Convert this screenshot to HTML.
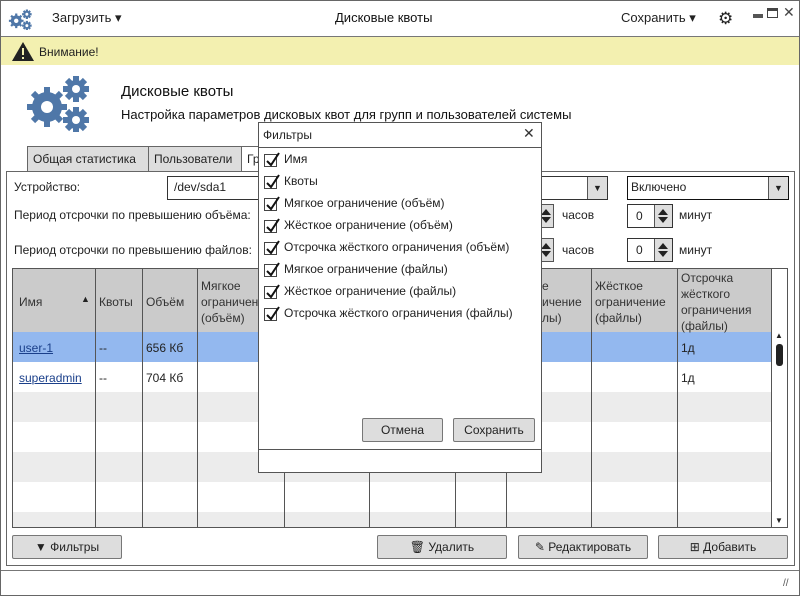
<!DOCTYPE html>
<html><head><meta charset="utf-8"><style>
*{box-sizing:border-box;margin:0;padding:0}
body{width:800px;height:596px;position:relative;overflow:hidden;background:#fff;font-family:"Liberation Sans","DejaVu Sans",sans-serif;font-size:12px;color:#222}
.a{position:absolute}
.btn{position:absolute;background:#ddd;border:1px solid #777;border-radius:2px;text-align:center;font-size:12px;line-height:22px}
.cell{position:absolute;border-left:1px solid #555}
.cb{position:absolute;width:13px;height:13px;border:1px solid #444;background:#fff}
.cb svg{position:absolute;left:0;top:-3px}
.hl{position:absolute;font-size:12px;color:#333;line-height:16px}
.spin{position:absolute;width:46px;height:24px;border:1px solid #333;background:#fff}
.spin span{position:absolute;left:8px;top:4px}
.spin i{position:absolute;right:0;top:0;width:18px;height:22px;background:#ddd;border-left:1px solid #555}
.sp{position:absolute;width:16px;height:24px;background:#ddd;border:1px solid #555}
.spin i:before,.sp:before{content:"";position:absolute;left:3px;top:4px;border-left:5px solid transparent;border-right:5px solid transparent;border-bottom:6px solid #222}
.spin i:after,.sp:after{content:"";position:absolute;left:3px;top:12px;border-left:5px solid transparent;border-right:5px solid transparent;border-top:6px solid #222}
.sp:before,.sp:after{left:2px}
</style></head><body>
<div class="a" style="left:0;top:0;width:800px;height:596px;border:1px solid #666"></div>
<svg class="a" style="left:8px;top:8px" width="26" height="22" viewBox="0 0 70 60"><g fill="#4f77a8"><circle cx="22" cy="35" r="15"/><circle cx="51" cy="17" r="9"/><circle cx="51" cy="48" r="9"/><g stroke="#4f77a8" stroke-width="6"><path d="M22 15v40M2 35h40M8 21l28 28M36 21L8 49"/><path d="M51 4v26M38 17h26M51 35v26M38 48h26M42 8l18 18M60 8L42 26M42 39l18 18M60 39L42 57"/></g></g><g fill="#fff"><circle cx="22" cy="35" r="6"/><circle cx="51" cy="17" r="4"/><circle cx="51" cy="48" r="4"/></g></svg>
<div class="a" style="left:52px;top:10px;font-size:13px">Загрузить ▾</div>
<div class="a" style="left:335px;top:10px;font-size:13px;color:#111">Дисковые квоты</div>
<div class="a" style="left:621px;top:10px;font-size:13px">Сохранить ▾</div>
<div class="a" style="left:718px;top:9px;font-size:17px;color:#222">⚙</div>
<div class="a" style="left:753px;top:14px;width:10px;height:4px;background:#555"></div>
<div class="a" style="left:767px;top:8px;width:11px;height:10px;border:1px solid #444;border-top:3px solid #444"></div>
<div class="a" style="left:783px;top:4px;font-size:14px;color:#444">✕</div>
<div class="a" style="left:1px;top:36px;width:798px;height:1px;background:#777"></div>
<div class="a" style="left:1px;top:37px;width:798px;height:28px;background:#f3f0b0"></div>
<svg class="a" style="left:11px;top:41px" width="24" height="21" viewBox="0 0 24 21"><path d="M12 1L23 20H1Z" fill="#222"/><rect x="11" y="7" width="2" height="7" fill="#f3f0b0"/><rect x="11" y="16" width="2" height="2" fill="#f3f0b0"/></svg>
<div class="a" style="left:39px;top:45px;font-size:12px">Внимание!</div>
<svg class="a" style="left:25px;top:72px" width="70" height="60" viewBox="0 0 70 60"><g fill="#4f77a8"><circle cx="22" cy="35" r="15"/><circle cx="51" cy="17" r="9"/><circle cx="51" cy="48" r="9"/><g stroke="#4f77a8" stroke-width="6"><path d="M22 15v40M2 35h40M8 21l28 28M36 21L8 49"/><path d="M51 4v26M38 17h26M51 35v26M38 48h26M42 8l18 18M60 8L42 26M42 39l18 18M60 39L42 57"/></g></g><g fill="#fff"><circle cx="22" cy="35" r="6"/><circle cx="51" cy="17" r="4"/><circle cx="51" cy="48" r="4"/></g></svg>
<div class="a" style="left:121px;top:83px;font-size:15px;color:#111">Дисковые квоты</div>
<div class="a" style="left:121px;top:107px;font-size:13px;color:#111">Настройка параметров дисковых квот для групп и пользователей системы</div>
<div class="a" style="left:27px;top:146px;width:122px;height:26px;background:#ddd;border:1px solid #666;padding:5px 5px">Общая статистика</div>
<div class="a" style="left:148px;top:146px;width:94px;height:26px;background:#ddd;border:1px solid #666;padding:5px 5px">Пользователи</div>
<div class="a" style="left:241px;top:146px;width:30px;height:26px;background:#fff;border:1px solid #666;border-bottom:none;padding:5px 5px">Гр</div>
<div class="a" style="left:6px;top:171px;width:789px;height:395px;border:1px solid #666"></div>
<div class="a" style="left:14px;top:180px">Устройство:</div>
<div class="a" style="left:167px;top:176px;width:441px;height:24px;border:1px solid #333;padding:3px 6px">/dev/sda1</div>
<div class="a" style="left:587px;top:177px;width:20px;height:22px;background:#ddd;border-left:1px solid #555;text-align:center;font-size:9px;line-height:22px">▼</div>
<div class="a" style="left:627px;top:176px;width:162px;height:24px;border:1px solid #111;padding:3px 3px">Включено</div>
<div class="a" style="left:768px;top:177px;width:20px;height:22px;background:#ddd;border-left:1px solid #555;text-align:center;font-size:9px;line-height:22px">▼</div>
<div class="a" style="left:14px;top:208px">Период отсрочки по превышению объёма:</div>
<div class="a" style="left:14px;top:243px">Период отсрочки по превышению файлов:</div>
<div class="sp" style="left:538px;top:204px"></div>
<div class="sp" style="left:538px;top:238px"></div>
<div class="a" style="left:562px;top:208px">часов</div><div class="a" style="left:562px;top:243px">часов</div>
<div class="spin" style="left:627px;top:204px"><span>0</span><i></i></div>
<div class="spin" style="left:627px;top:238px"><span>0</span><i></i></div>
<div class="a" style="left:679px;top:208px">минут</div><div class="a" style="left:679px;top:243px">минут</div>
<div class="a" style="left:12px;top:268px;width:776px;height:260px;border:1px solid #555;background:#fff"></div>
<div class="a" style="left:13px;top:269px;width:758px;height:63px;background:#cbcbcb"></div>
<div class="a" style="left:13px;top:332px;width:758px;height:30px;background:#93b8ef"></div>
<div class="a" style="left:13px;top:392px;width:758px;height:30px;background:#ececec"></div>
<div class="a" style="left:13px;top:452px;width:758px;height:30px;background:#ececec"></div>
<div class="a" style="left:13px;top:512px;width:758px;height:15px;background:#ececec"></div>
<div class="cell" style="left:95px;top:269px;height:258px"></div>
<div class="cell" style="left:142px;top:269px;height:258px"></div>
<div class="cell" style="left:197px;top:269px;height:258px"></div>
<div class="cell" style="left:284px;top:269px;height:258px"></div>
<div class="cell" style="left:369px;top:269px;height:258px"></div>
<div class="cell" style="left:455px;top:269px;height:258px"></div>
<div class="cell" style="left:506px;top:269px;height:258px"></div>
<div class="cell" style="left:591px;top:269px;height:258px"></div>
<div class="cell" style="left:677px;top:269px;height:258px"></div>
<div class="cell" style="left:771px;top:269px;height:258px"></div>
<div class="hl" style="left:19px;top:294px">Имя</div>
<div class="a" style="left:81px;top:294px;font-size:9px">▲</div>
<div class="hl" style="left:99px;top:294px">Квоты</div>
<div class="hl" style="left:146px;top:294px">Объём</div>
<div class="hl" style="left:201px;top:278px;width:82px;overflow:hidden;white-space:nowrap">Мягкое<br>ограничение<br>(объём)</div>
<div class="hl" style="left:542px;top:278px">е<br>ичение<br>лы)</div>
<div class="hl" style="left:595px;top:278px">Жёсткое<br>ограничение<br>(файлы)</div>
<div class="hl" style="left:681px;top:270px">Отсрочка<br>жёсткого<br>ограничения<br>(файлы)</div>
<div class="a" style="left:19px;top:341px;color:#1a3f8a;text-decoration:underline">user-1</div>
<div class="a" style="left:99px;top:341px">--</div>
<div class="a" style="left:146px;top:341px">656 Кб</div>
<div class="a" style="left:681px;top:341px">1д</div>
<div class="a" style="left:19px;top:371px;color:#1a3f8a;text-decoration:underline">superadmin</div>
<div class="a" style="left:99px;top:371px">--</div>
<div class="a" style="left:146px;top:371px">704 Кб</div>
<div class="a" style="left:681px;top:371px">1д</div>
<div class="a" style="left:772px;top:332px;width:15px;height:195px;background:#fff"></div>
<div class="a" style="left:775px;top:331px;font-size:8px">▲</div>
<div class="a" style="left:776px;top:344px;width:7px;height:22px;background:#222;border-radius:3px"></div>
<div class="a" style="left:775px;top:516px;font-size:8px">▼</div>
<div class="btn" style="left:12px;top:535px;width:110px;height:24px">▼ Фильтры</div>
<div class="btn" style="left:377px;top:535px;width:130px;height:24px">🗑 Удалить</div>
<div class="btn" style="left:518px;top:535px;width:130px;height:24px">✎ Редактировать</div>
<div class="btn" style="left:658px;top:535px;width:130px;height:24px">⊞ Добавить</div>
<div class="a" style="left:1px;top:570px;width:798px;height:1px;background:#777"></div>
<div class="a" style="left:783px;top:578px;font-size:10px;color:#555">//</div>
<div class="a" style="left:258px;top:122px;width:284px;height:351px;background:#fff;border:1px solid #555"></div>
<div class="a" style="left:259px;top:147px;width:282px;height:1px;background:#555"></div>
<div class="a" style="left:263px;top:128px">Фильтры</div>
<div class="a" style="left:523px;top:125px;font-size:14px;color:#333">✕</div>
<div class="a" style="left:259px;top:449px;width:282px;height:1px;background:#555"></div>
<div class="btn" style="left:362px;top:418px;width:81px;height:24px">Отмена</div>
<div class="btn" style="left:453px;top:418px;width:82px;height:24px">Сохранить</div>
<div class="cb" style="left:264px;top:154px"><svg width="15" height="16"><path d="M2 9l4 4 8-12" stroke="#111" stroke-width="2" fill="none"/></svg></div><div class="a" style="left:284px;top:152px">Имя</div>
<div class="cb" style="left:264px;top:176px"><svg width="15" height="16"><path d="M2 9l4 4 8-12" stroke="#111" stroke-width="2" fill="none"/></svg></div><div class="a" style="left:284px;top:174px">Квоты</div>
<div class="cb" style="left:264px;top:198px"><svg width="15" height="16"><path d="M2 9l4 4 8-12" stroke="#111" stroke-width="2" fill="none"/></svg></div><div class="a" style="left:284px;top:196px">Мягкое ограничение (объём)</div>
<div class="cb" style="left:264px;top:220px"><svg width="15" height="16"><path d="M2 9l4 4 8-12" stroke="#111" stroke-width="2" fill="none"/></svg></div><div class="a" style="left:284px;top:218px">Жёсткое ограничение (объём)</div>
<div class="cb" style="left:264px;top:242px"><svg width="15" height="16"><path d="M2 9l4 4 8-12" stroke="#111" stroke-width="2" fill="none"/></svg></div><div class="a" style="left:284px;top:240px">Отсрочка жёсткого ограничения (объём)</div>
<div class="cb" style="left:264px;top:264px"><svg width="15" height="16"><path d="M2 9l4 4 8-12" stroke="#111" stroke-width="2" fill="none"/></svg></div><div class="a" style="left:284px;top:262px">Мягкое ограничение (файлы)</div>
<div class="cb" style="left:264px;top:286px"><svg width="15" height="16"><path d="M2 9l4 4 8-12" stroke="#111" stroke-width="2" fill="none"/></svg></div><div class="a" style="left:284px;top:284px">Жёсткое ограничение (файлы)</div>
<div class="cb" style="left:264px;top:308px"><svg width="15" height="16"><path d="M2 9l4 4 8-12" stroke="#111" stroke-width="2" fill="none"/></svg></div><div class="a" style="left:284px;top:306px">Отсрочка жёсткого ограничения (файлы)</div>
</body></html>
